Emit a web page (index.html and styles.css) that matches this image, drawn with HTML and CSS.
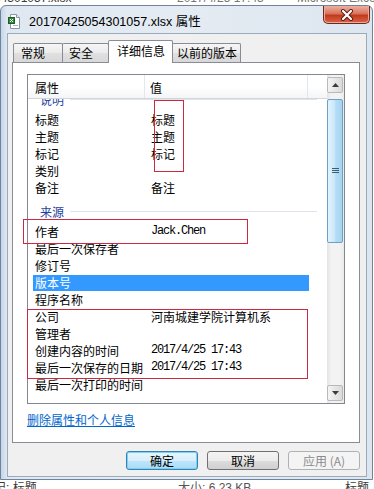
FILE: index.html
```html
<!DOCTYPE html>
<html>
  <head>
    <meta charset="utf-8">
    <title>20170425054301057.xlsx 属性</title>
    <meta name="viewport" content="width=device-width, initial-scale=1.0">
    <link rel="stylesheet" href="styles.css">
  </head>
  <body>
    <!-- explorer window behind the dialog, only its edges show -->
    <div class="behind behind_top">
      <span class="b1">54301057.xlsx</span>
      <span class="b2">2017/4/25 17:43</span>
      <span class="b3">Microsoft Excel</span>
    </div>

    <div class="window">
      <div class="titlebar">
        <svg class="icon" width="12" height="15" viewBox="0 0 12 15">
          <path d="M2.5 0.5h6l3 3v11h-9z" fill="#ffffff" stroke="#8a97a8"></path>
          <path d="M8.5 0.5v3h3" fill="#eef2f6" stroke="#8a97a8"></path>
          <rect x="0.5" y="3.5" width="6" height="6" fill="#2f8a3c" stroke="#1d5e27"></rect>
          <path d="M2 5l3 3M5 5l-3 3" stroke="#ffffff" stroke-width="1"></path>
          <rect x="5" y="11" width="5" height="1" fill="#9fb5cc"></rect>
        </svg>
        <span class="title">20170425054301057.xlsx 属性</span>
        <div class="close">
          <svg width="14" height="12" viewBox="0 0 14 12">
            <path d="M3 2l8 8M11 2l-8 8" stroke="#5a1a10" stroke-width="4" stroke-linecap="round"></path>
            <path d="M3 2l8 8M11 2l-8 8" stroke="#ffffff" stroke-width="2.2" stroke-linecap="round"></path>
          </svg>
        </div>
      </div>

      <div class="client">
        <div class="tabs">
          <div class="tab tab_1">常规</div>
          <div class="tab tab_2">安全</div>
          <div class="tab tab_3 active">详细信息</div>
          <div class="tab tab_4">以前的版本</div>
        </div>

        <div class="panel">
          <div class="list">
            <div class="list_main">
              <div class="list_head">
                <span class="head_name">属性</span>
                <span class="head_value">值</span>
                <span class="head_rest"></span>
              </div>
              <div class="list_body">
                <div class="group group_first"><span>说明</span><i></i></div>
                <div class="row"><span class="name">标题</span><span class="value">标题</span></div>
                <div class="row"><span class="name">主题</span><span class="value">主题</span></div>
                <div class="row"><span class="name">标记</span><span class="value">标记</span></div>
                <div class="row"><span class="name">类别</span><span class="value"></span></div>
                <div class="row"><span class="name">备注</span><span class="value">备注</span></div>
                <div class="group"><span>来源</span><i></i></div>
                <div class="row"><span class="name">作者</span><span class="value lat">Jack.Chen</span></div>
                <div class="row"><span class="name">最后一次保存者</span><span class="value"></span></div>
                <div class="row"><span class="name">修订号</span><span class="value"></span></div>
                <div class="row selected"><span class="name">版本号</span><span class="value"></span></div>
                <div class="row"><span class="name">程序名称</span><span class="value"></span></div>
                <div class="row"><span class="name">公司</span><span class="value">河南城建学院计算机系</span></div>
                <div class="row"><span class="name">管理者</span><span class="value"></span></div>
                <div class="row"><span class="name">创建内容的时间</span><span class="value lat">2017/4/25 17:43</span></div>
                <div class="row"><span class="name">最后一次保存的日期</span><span class="value lat">2017/4/25 17:43</span></div>
                <div class="row"><span class="name">最后一次打印的时间</span><span class="value"></span></div>
              </div>
            </div>

            <div class="scrollbar">
              <div class="sb_button">
                <svg width="7" height="4" viewBox="0 0 7 4"><path d="M0 4L3.5 0L7 4z" fill="#3b3b3b"></path></svg>
              </div>
              <div class="sb_thumb">
                <svg width="7" height="6" viewBox="0 0 7 6">
                  <path d="M0 0.5h7M0 2.5h7M0 4.5h7" stroke="#3d5d76" stroke-width="1"></path>
                </svg>
              </div>
              <div class="sb_track"></div>
              <div class="sb_button">
                <svg width="7" height="4" viewBox="0 0 7 4"><path d="M0 0L3.5 4L7 0z" fill="#3b3b3b"></path></svg>
              </div>
            </div>
          </div>

          <a class="remove_link" href="#">删除属性和个人信息</a>
        </div>

        <div class="buttons">
          <div class="btn btn_default">确定</div>
          <div class="btn">取消</div>
          <div class="btn btn_disabled">应用 (A)</div>
        </div>
      </div>
    </div>

    <div class="behind behind_bottom">
      <span class="b1">标记: 标题</span>
      <span class="b2">大小: 6.23 KB</span>
      <span class="b3">标题</span>
    </div>

    <!-- red boxes drawn on top of the screenshot -->
    <div class="mark mark_values"></div>
    <div class="mark mark_author"></div>
    <div class="mark mark_company"></div>
  </body>
</html>
```

FILE: styles.css
```css
html, body {
  margin: 0;
  padding: 0;
}

body {
  position: relative;
  width: 374px;
  height: 489px;
  overflow: hidden;
  background: #ffffff;
  color: #000000;

  font-family: "Noto Sans CJK SC", sans-serif;
  font-size: 12px;
}

/* window behind */
.behind {
  display: flex;
  overflow: hidden;
  white-space: nowrap;
  font-family: "Liberation Sans", "Noto Sans CJK SC", sans-serif;
  font-size: 12px;
  line-height: 15px;
  color: #3a3a3a;
}

.behind_top {
  height: 5px;
}

.behind_top span {
  margin-top: -9px;
  flex: none;
}

.behind_top .b1 { margin-left: -6px; width: 183px; }
.behind_top .b2 { width: 120px; color: #777777; }
.behind_top .b3 { color: #777777; }

.behind_bottom {
  height: 9px;
}

.behind_bottom span {
  margin-top: 1px;
  flex: none;
}

.behind_bottom .b1 { margin-left: -18px; width: 196px; }
.behind_bottom .b2 { width: 167px; color: #555555; }

/* dialog frame */
.window {
  box-sizing: border-box;
  width: 373px;
  height: 475px;
  padding: 0 5px 2px 6px;

  border: 1px solid #71839a;
  border-radius: 6px 6px 0 0;
  background: linear-gradient(to right, #c4d6e9 0, #dfe8f1 6px, #e4ebf3 50%, #dde6ef 100%);

  display: flex;
  flex-direction: column;
}

.titlebar {
  height: 27px;
  flex: none;
  display: flex;
  align-items: center;
}

.titlebar .icon {
  margin: 4px 0 0 1px;
  flex: none;
}

.title {
  margin: 2px 0 0 9px;
  font-family: "Liberation Sans", "Noto Sans CJK SC", sans-serif;
  font-size: 12.5px;
  color: #000000;
}

.close {
  align-self: flex-start;
  margin-left: auto;
  margin-right: -3px;
  width: 47px;
  height: 18px;
  box-sizing: border-box;

  border: 1px solid #6a2a20;
  border-top: none;
  border-radius: 0 0 5px 5px;
  background: linear-gradient(#eab1a4 0, #d9735b 45%, #c23a1d 55%, #d7654a 100%);
  box-shadow: inset 0 0 0 1px #f0a898;

  display: flex;
  align-items: center;
  justify-content: center;
}

.client {
  box-sizing: border-box;
  height: 444px;
  flex: none;
  padding: 6px 6px 0 4px;

  border: 1px solid #9babbe;
  background: #f0f0f0;
}

/* tabs */
.tabs {
  position: relative;
  z-index: 1;
  height: 22px;
  padding-left: 1px;

  display: flex;
  align-items: flex-end;
}

.tab {
  box-sizing: border-box;
  height: 19px;
  padding-left: 6px;
  line-height: 18px;

  border: 1px solid #898c95;
  border-bottom: none;
  border-radius: 2px 2px 0 0;
  background: linear-gradient(#f6f6f6, #ebebeb 50%, #e0e0e0 50%, #d8d8d8);

  white-space: nowrap;
}

.tab + .tab {
  margin-left: -1px;
}

.tab_1 { width: 50px; padding-left: 7px; }
.tab_2 { width: 47px; }
.tab_3 { width: 65px; padding-left: 8px; }
.tab_4 { width: 69px; padding-left: 4px; }

.tab.active {
  position: relative;
  z-index: 2;
  height: 23px;
  margin-bottom: -1px;
  line-height: 20px;
  background: #ffffff;
}

.panel {
  box-sizing: border-box;
  height: 381px;
  padding: 11px 0 0 14px;

  border: 1px solid #898c95;
  background: #ffffff;
}

/* property list */
.list {
  box-sizing: border-box;
  width: 318px;
  height: 330px;

  border: 1px solid #828790;
  display: flex;
}

.list_main {
  flex: 1;
  display: flex;
  flex-direction: column;
  min-width: 0;
}

.list_head {
  position: relative;
  z-index: 1;
  height: 23px;
  flex: none;
  display: flex;
  border-bottom: 1px solid #d5d5d5;
  background: linear-gradient(#ffffff, #ffffff 50%, #f4f5f7);
}

.list_head span {
  box-sizing: border-box;
  height: 23px;
  padding-top: 2px;
  line-height: 21px;
}

.head_name {
  width: 117px;
  padding-left: 7px;
  border-right: 1px solid #e3e6ea;
}

.head_value {
  width: 163px;
  padding-left: 5px;
  border-right: 1px solid #e3e6ea;
}

.list_body {
  flex: 1;
  overflow: hidden;
}

.row {
  box-sizing: border-box;
  width: 276px;
  height: 17px;
  margin-left: 5px;
  padding-left: 2px;

  display: flex;
  line-height: 17px;
  white-space: nowrap;
}

.row .name {
  width: 116px;
  flex: none;
}

.row .value {
  flex: 1;
}

.row .lat {
  font-family: "Liberation Mono", monospace;
  font-size: 12px;
  letter-spacing: -1.2px;
}

.row.selected {
  background: linear-gradient(transparent 1px, #3399ff 1px);
  color: #ffffff;
}

.group {
  box-sizing: border-box;
  width: 284px;
  height: 27px;
  margin-left: 5px;
  padding: 4px 0 0 7px;

  display: flex;
  align-items: center;
  color: #1e3f9e;
}

.group i {
  flex: 1;
  height: 1px;
  margin-left: 6px;
  background: #dde4ee;
}

.group_first {
  margin-top: -15px;
}

/* scrollbar */
.scrollbar {
  width: 17px;
  flex: none;
  display: flex;
  flex-direction: column;
  background: linear-gradient(to right, #e4e4e4, #f3f3f3 25%, #f3f3f3 75%, #eaeaea);
}

.sb_button {
  box-sizing: border-box;
  width: 16px;
  height: 16px;
  margin: 2px 0 2px 0;

  border: 1px solid #b9b9b9;
  border-radius: 2px;
  background: linear-gradient(to right, #f4f4f4, #e6e6e6 50%, #dadada);

  display: flex;
  align-items: center;
  justify-content: center;
}

.sb_thumb {
  box-sizing: border-box;
  width: 16px;
  height: 144px;
  margin-top: 4px;

  border: 1px solid #6e9fc4;
  border-radius: 2px;
  background: linear-gradient(to right, #e3f3fc, #cbe8f9 45%, #b3ddf5 55%, #a7d4f0);

  display: flex;
  align-items: center;
  justify-content: center;
}

.sb_track {
  flex: 1;
}

.remove_link {
  display: inline-block;
  margin-top: 8px;
  line-height: 16px;
  color: #0066cc;
  text-decoration: underline;
}

/* dialog buttons */
.buttons {
  margin-top: 8px;
  display: flex;
  justify-content: flex-end;
  gap: 9px;
}

.btn {
  box-sizing: border-box;
  width: 72px;
  height: 19px;
  line-height: 17px;
  text-align: center;

  border: 1px solid #707070;
  border-radius: 3px;
  background: linear-gradient(#f4f4f4, #ececec 50%, #dddddd 50%, #d0d0d0);
}

.btn_default {
  border-color: #3c7fb1;
  background: linear-gradient(#e8f5fc, #d9effb 50%, #bee6fd 50%, #a9dbf6);
  box-shadow: inset 0 0 0 1px #78d4f4;
}

.btn_disabled {
  border-color: #adb2b5;
  background: #f4f4f4;
  color: #8b8b8b;
}

/* annotation boxes */
.mark {
  position: absolute;
  box-sizing: border-box;
  border: 1px solid #cc2840;
}

.mark_values {
  left: 154px;
  top: 100px;
  width: 30px;
  height: 72px;
}

.mark_author {
  left: 23px;
  top: 219px;
  width: 225px;
  height: 25px;
}

.mark_company {
  left: 27px;
  top: 309px;
  width: 281px;
  height: 70px;
}
```
